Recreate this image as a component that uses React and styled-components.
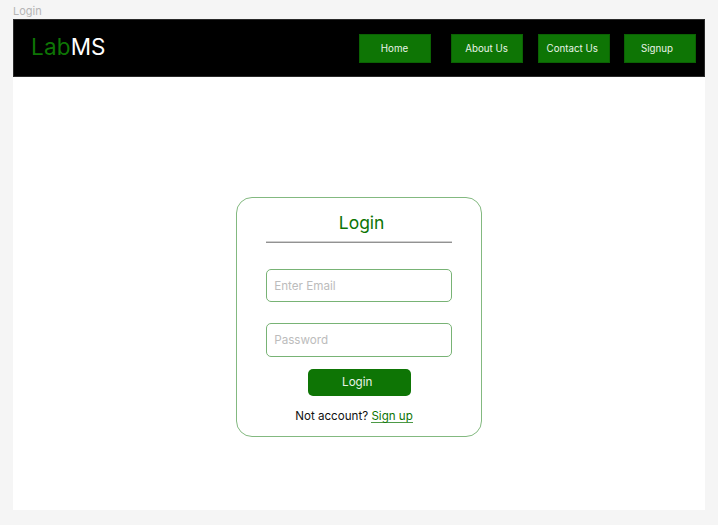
import React from "react";
import styled, { createGlobalStyle } from "styled-components";

const GlobalStyle = createGlobalStyle`
  * { box-sizing: border-box; }
  body {
    margin: 0;
    background: #f5f5f5;
    font-family: Inter, "Liberation Sans", sans-serif;
    overflow: hidden;
  }
`;

const Canvas = styled.div`
  width: 718px;
  height: 525px;
  padding: 4px 13px 0;
`;

const FrameLabel = styled.div`
  height: 15px;
  line-height: 15px;
  font-size: 11px;
  color: #b5b5b5;
`;

const Frame = styled.div`
  width: 691.5px;
  height: 491px;
  background: #fff;
`;

const Header = styled.header`
  display: flex;
  align-items: flex-start;
  justify-content: space-between;
  height: 58px;
  padding: 14px 7.5px 0 17px;
  background: #000;
  border: 1px solid #2a2a2a;
`;

const Logo = styled.div`
  margin-top: -1px;
  font-size: 22.5px;
  font-weight: 370;
  line-height: 28px;
  color: #fff;
`;

const LogoAccent = styled.span`
  letter-spacing: 0.2px;
  color: #0e7505;
`;

const Nav = styled.nav`
  display: flex;
  gap: 14.4px;
`;

const NavButton = styled.a`
  height: 29px;
  width: 72px;
  margin-right: ${(p) => p.$after || 0}px;
  padding-left: ${(p) => p.$inset}px;
  line-height: 29px;
  font-size: 9.75px;
  white-space: nowrap;
  color: #e9f3e8;
  background: #0e7505;
  box-shadow: inset 0 0 0 1px #0b6203;
`;

const Main = styled.main`
  display: flex;
  justify-content: center;
  padding-top: 120px;
`;

const Card = styled.form`
  display: flex;
  flex-direction: column;
  width: 246px;
  height: 240px;
  padding: 0 29px;
  border: 1px solid #83b980;
  border-radius: 16px;
`;

const Title = styled.h1`
  margin: 12px 0 0;
  padding-left: 73px;
  height: 31px;
  font-size: 17.5px;
  font-weight: 400;
  line-height: 25px;
  color: #0e7505;
`;

const Divider = styled.div`
  height: 2px;
  background: linear-gradient(#cfcfcf 50%, #929292 50%);
`;

const Field = styled.input`
  width: 186px;
  height: ${(p) => p.$height}px;
  margin-top: ${(p) => p.$gap}px;
  padding: ${(p) => p.$drop || 0}px 8px 1px 7.5px;
  border: 1px solid #78b375;
  border-radius: 5px;
  outline: none;
  background: transparent;
  font: 400 11.65px Inter, "Liberation Sans", sans-serif;

  &::placeholder {
    color: #bcbcbc;
    opacity: 1;
  }
`;

const Submit = styled.button`
  width: 103px;
  height: 27px;
  margin: 12px 0 0 42px;
  padding: 0 4px 1px 0;
  border: 0;
  border-radius: 5px;
  background: #0e7505;
  color: #e9f3e8;
  font: 400 11.65px Inter, "Liberation Sans", sans-serif;
`;

const Prompt = styled.p`
  margin: 12px 0 0;
  padding-left: 29.5px;
  font-size: 11.6px;
  line-height: 16px;
  white-space: nowrap;
  color: #111;
`;

const SignupLink = styled.a`
  display: inline-block;
  height: 14px;
  line-height: 14px;
  color: #0e7505;
  border-bottom: 1px solid #4c9946;
`;

export default function App() {
  return (
    <>
      <GlobalStyle />
      <Canvas>
        <FrameLabel>Login</FrameLabel>
        <Frame>
          <Header>
            <Logo>
              <LogoAccent>Lab</LogoAccent>MS
            </Logo>
            <Nav>
              <NavButton $inset={22} $after={6}>Home</NavButton>
              <NavButton $inset={14}>About Us</NavButton>
              <NavButton $inset={9}>Contact Us</NavButton>
              <NavButton $inset={17}>Signup</NavButton>
            </Nav>
          </Header>
          <Main>
            <Card onSubmit={(e) => e.preventDefault()}>
              <Title>Login</Title>
              <Divider />
              <Field type="email" placeholder="Enter Email" $height={33} $gap={26} $drop={1} />
              <Field type="password" placeholder="Password" $height={34} $gap={21} />
              <Submit>Login</Submit>
              <Prompt>
                Not account? <SignupLink>Sign up</SignupLink>
              </Prompt>
            </Card>
          </Main>
        </Frame>
      </Canvas>
    </>
  );
}
